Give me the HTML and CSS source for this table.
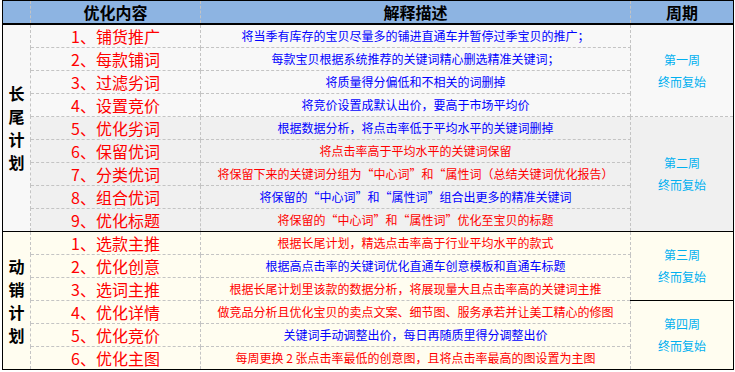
FILE: index.html
```html
<!DOCTYPE html>
<html lang="zh-CN">
<head>
<meta charset="utf-8">
<title>优化计划</title>
<link rel="stylesheet" href="styles.css">
</head>
<body>
<table class="plan">
  <colgroup>
    <col class="c-cat"><col class="c-item"><col class="c-desc"><col class="c-week">
  </colgroup>
  <thead>
    <tr class="head">
      <th></th><th>优化内容</th><th>解释描述</th><th>周期</th>
    </tr>
  </thead>
  <tbody class="g1">
    <tr class="wk1">
      <td class="cat" rowspan="9"><span class="ch">长</span><span class="ch">尾</span><span class="ch">计</span><span class="ch">划</span></td>
      <td class="item">1、铺货推广</td>
      <td class="desc blue">将当季有库存的宝贝尽量多的铺进直通车并暂停过季宝贝的推广；</td>
      <td class="week" rowspan="4">第一周<br>终而复始</td>
    </tr>
    <tr class="wk1"><td class="item">2、每款铺词</td><td class="desc blue">每款宝贝根据系统推荐的关键词精心删选精准关键词；</td></tr>
    <tr class="wk1"><td class="item">3、过滤劣词</td><td class="desc blue">将质量得分偏低和不相关的词删掉</td></tr>
    <tr class="wk1"><td class="item">4、设置竞价</td><td class="desc blue">将竞价设置成默认出价，要高于市场平均价</td></tr>
    <tr class="wk2">
      <td class="item">5、优化劣词</td>
      <td class="desc blue">根据数据分析，将点击率低于平均水平的关键词删掉</td>
      <td class="week" rowspan="5">第二周<br>终而复始</td>
    </tr>
    <tr class="wk2"><td class="item">6、保留优词</td><td class="desc red">将点击率高于平均水平的关键词保留</td></tr>
    <tr class="wk2"><td class="item">7、分类优词</td><td class="desc red">将保留下来的关键词分组为“中心词”和“属性词（总结关键词优化报告）</td></tr>
    <tr class="wk2"><td class="item">8、组合优词</td><td class="desc blue">将保留的“中心词”和“属性词”组合出更多的精准关键词</td></tr>
    <tr class="wk2"><td class="item">9、优化标题</td><td class="desc red">将保留的“中心词”和“属性词”优化至宝贝的标题</td></tr>
  </tbody>
  <tbody class="g2">
    <tr class="first">
      <td class="cat" rowspan="6"><span class="ch">动</span><span class="ch">销</span><span class="ch">计</span><span class="ch">划</span></td>
      <td class="item">1、选款主推</td>
      <td class="desc red">根据长尾计划，精选点击率高于行业平均水平的款式</td>
      <td class="week" rowspan="3">第三周<br>终而复始</td>
    </tr>
    <tr><td class="item">2、优化创意</td><td class="desc blue">根据高点击率的关键词优化直通车创意模板和直通车标题</td></tr>
    <tr><td class="item">3、选词主推</td><td class="desc red">根据长尾计划里该款的数据分析，将展现量大且点击率高的关键词主推</td></tr>
    <tr>
      <td class="item">4、优化详情</td>
      <td class="desc red">做竞品分析且优化宝贝的卖点文案、细节图、服务承若并让美工精心的修图</td>
      <td class="week" rowspan="3">第四周<br>终而复始</td>
    </tr>
    <tr><td class="item">5、优化竞价</td><td class="desc blue">关键词手动调整出价，每日再随质里得分调整出价</td></tr>
    <tr><td class="item">6、优化主图</td><td class="desc red">每周更换 2 张点击率最低的创意图，且将点击率最高的图设置为主图</td></tr>
  </tbody>
</table>
</body>
</html>
```
FILE: styles.css
```css
html, body {
  margin: 0;
  padding: 0;
  background: #ffffff;
}
body {
  font-family: "Noto Sans CJK SC", "Noto Sans", sans-serif;
}
.plan {
  margin-left: 2px;
  width: 731px;
  table-layout: fixed;
  border-collapse: collapse;
  border: 1px solid #000;
}
.c-cat { width: 28px; }
.c-item { width: 170px; }
.c-desc { width: 430px; }
.c-week { width: 103px; }

.plan th, .plan td {
  padding: 0;
  text-align: center;
  vertical-align: middle;
  border: 1px dashed #c4c4c4;
  white-space: nowrap;
  overflow: visible;
}
.head th {
  height: 22px;
  background: #8db4e2;
  font-size: 16px;
  font-weight: bold;
  color: #000;
  line-height: 20px;
  border-top: 1px solid #000;
  border-bottom: 2px solid #000;
}
.plan td {
  height: 22px;
  line-height: 16px;
}
.item {
  font-size: 16px;
  color: #ff0000;
}
.desc {
  font-size: 12px;
}
.blue { color: #0000ff; }
.red { color: #ff0000; }

.week {
  font-size: 12px;
  color: #00b0f0;
  line-height: 22px !important;
}
.cat {
  font-size: 16px;
  font-weight: bold;
  color: #000;
  border-left: 1px solid #000;
}
.ch {
  display: block;
  height: 23px;
  line-height: 23px;
}
.wk1 td { background: #f8f8f8; }
.wk2 td { background: #f0f0f0; }
.g1 .cat { background: #f8f8f8; }
.g2 td { background: #fffdf0; }
.g2 .first td { border-top: 1px solid #000; }
.week { border-right: 1px solid #000 !important; }
.g2 tr:last-child td, .g2 .cat, .g2 .week:last-of-type { border-bottom: 1px solid #000; }
```
